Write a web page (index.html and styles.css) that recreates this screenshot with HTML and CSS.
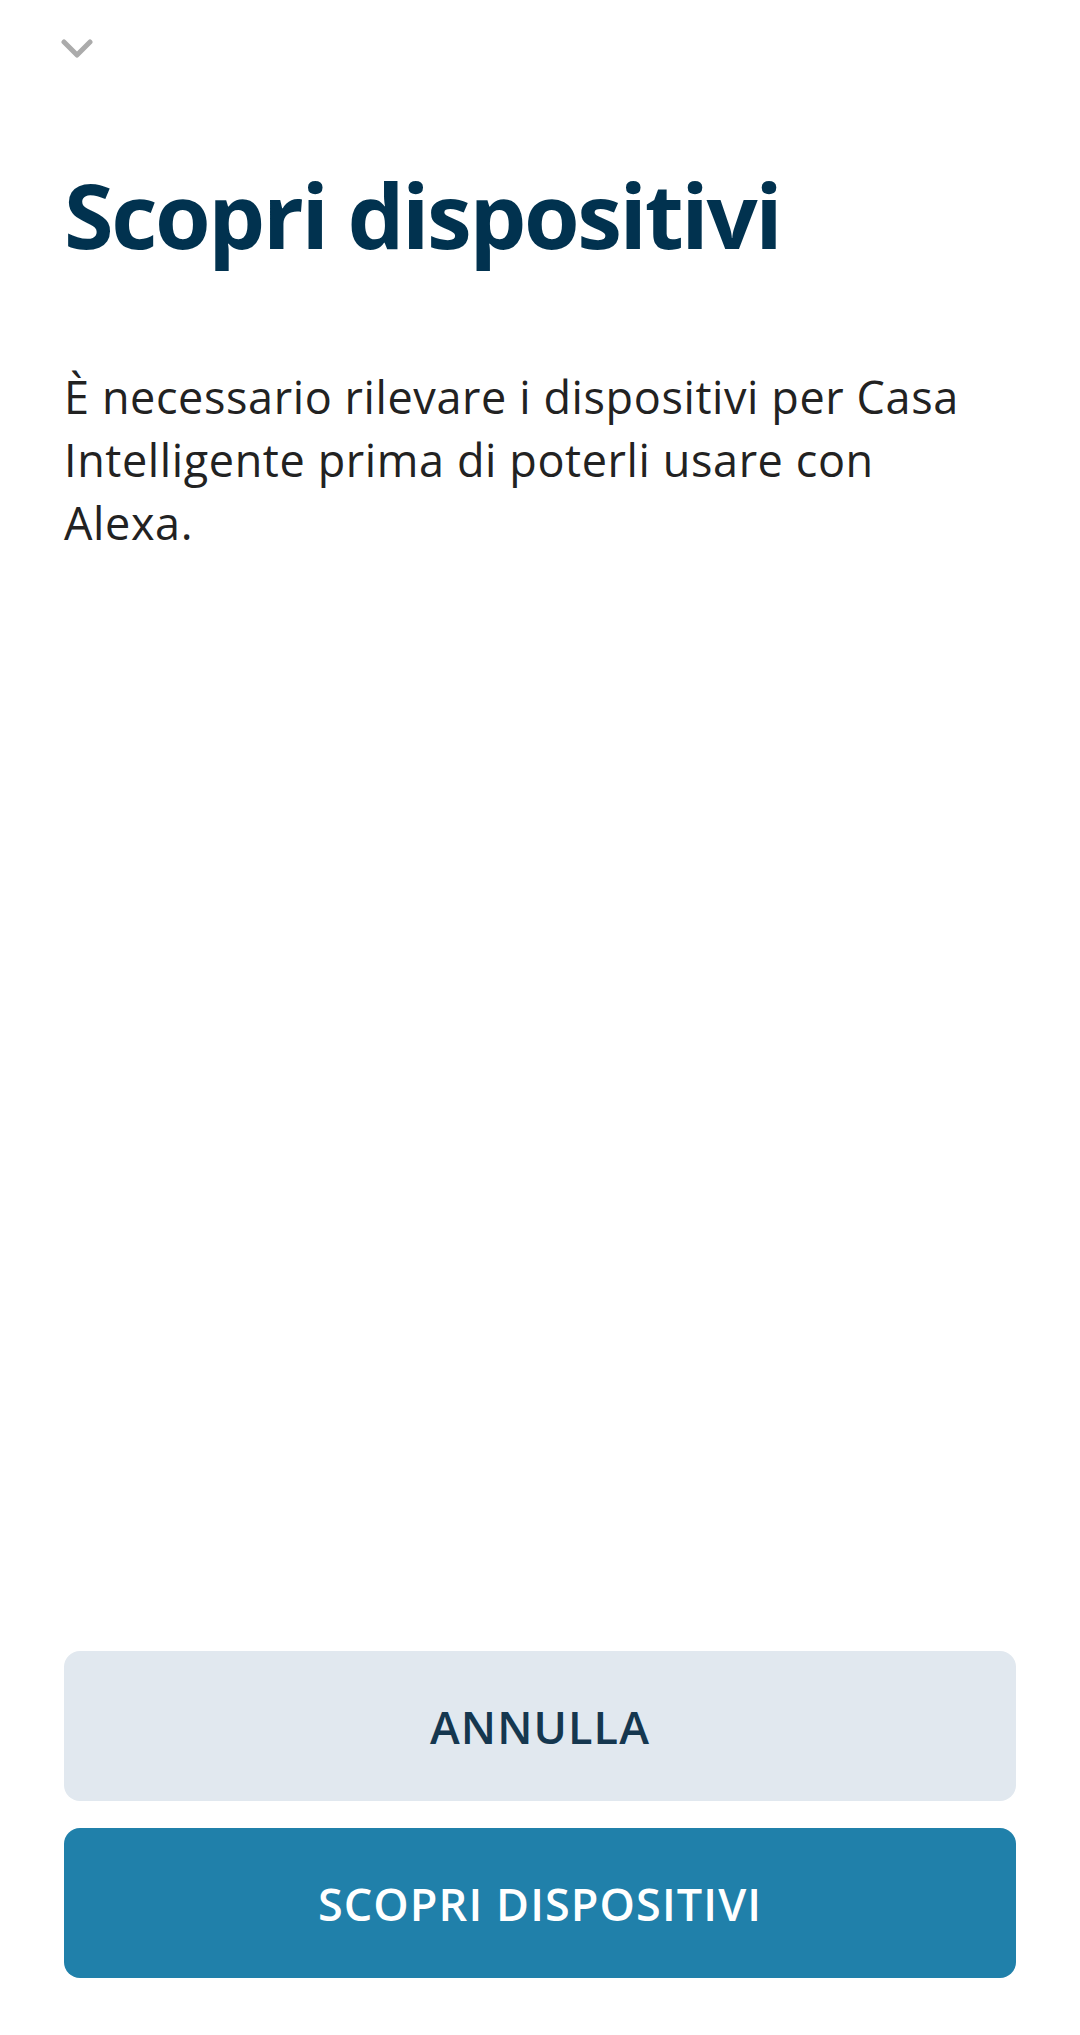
FILE: index.html
```html
<!DOCTYPE html>
<html lang="it">
<head>
    <meta charset="UTF-8">
    <meta name="viewport" content="width=device-width, initial-scale=1.0">
    <title>Scopri dispositivi</title>
    <link rel="stylesheet" href="styles.css">
</head>
<body>
    <div class="sheet">
        <header class="sheet-header">
            <button class="close-btn" type="button" aria-label="Chiudi">
                <svg width="32" height="20" viewBox="0 0 32 20">
                    <polyline points="3,3 16,16 29,3" fill="none" stroke="currentColor" stroke-width="5" stroke-linecap="round" stroke-linejoin="round"/>
                </svg>
            </button>
        </header>

        <h1 class="sheet-title">Scopri dispositivi</h1>

        <p class="sheet-text">È necessario rilevare i dispositivi per Casa Intelligente prima di poterli usare con Alexa.</p>

        <div class="sheet-actions">
            <button class="action-btn action-btn--secondary" type="button">ANNULLA</button>
            <button class="action-btn action-btn--primary" type="button">SCOPRI DISPOSITIVI</button>
        </div>
    </div>
</body>
</html>
```

FILE: styles.css
```css
:root {
    --title-color: #01324f;
    --text-color: #222222;
    --muted-color: #ababab;
    --secondary-bg: #e1e8ef;
    --secondary-text: #15374f;
    --primary-bg: #2080aa;
}

* {
    margin: 0;
    padding: 0;
    box-sizing: border-box;
    font-family: 'Open Sans', 'Noto Sans', sans-serif;
}

body {
    background-color: #fff;
}

.sheet {
    display: flex;
    flex-direction: column;
    min-height: 100vh;
    padding: 0 64px 57px;
}

.sheet-header {
    padding-top: 39px;
}

.close-btn {
    display: block;
    margin-left: -3px;
    background: none;
    border: none;
    color: var(--muted-color);
    cursor: pointer;
}

.close-btn svg {
    display: block;
}

.sheet-title {
    margin-top: 101px;
    font-size: 90px;
    line-height: 108px;
    font-weight: 700;
    letter-spacing: -2.4px;
    color: var(--title-color);
}

.sheet-text {
    max-width: 920px;
    margin-top: 97px;
    font-size: 45px;
    line-height: 63px;
    letter-spacing: 0.6px;
    color: var(--text-color);
}

.sheet-actions {
    margin-top: auto;
    display: flex;
    flex-direction: column;
    gap: 27px;
}

.action-btn {
    width: 100%;
    height: 150px;
    border: none;
    border-radius: 16px;
    font-size: 45px;
    font-weight: 600;
    letter-spacing: 1.1px;
    cursor: pointer;
}

.action-btn--secondary {
    background-color: var(--secondary-bg);
    color: var(--secondary-text);
}

.action-btn--primary {
    background-color: var(--primary-bg);
    color: #fff;
}
```
